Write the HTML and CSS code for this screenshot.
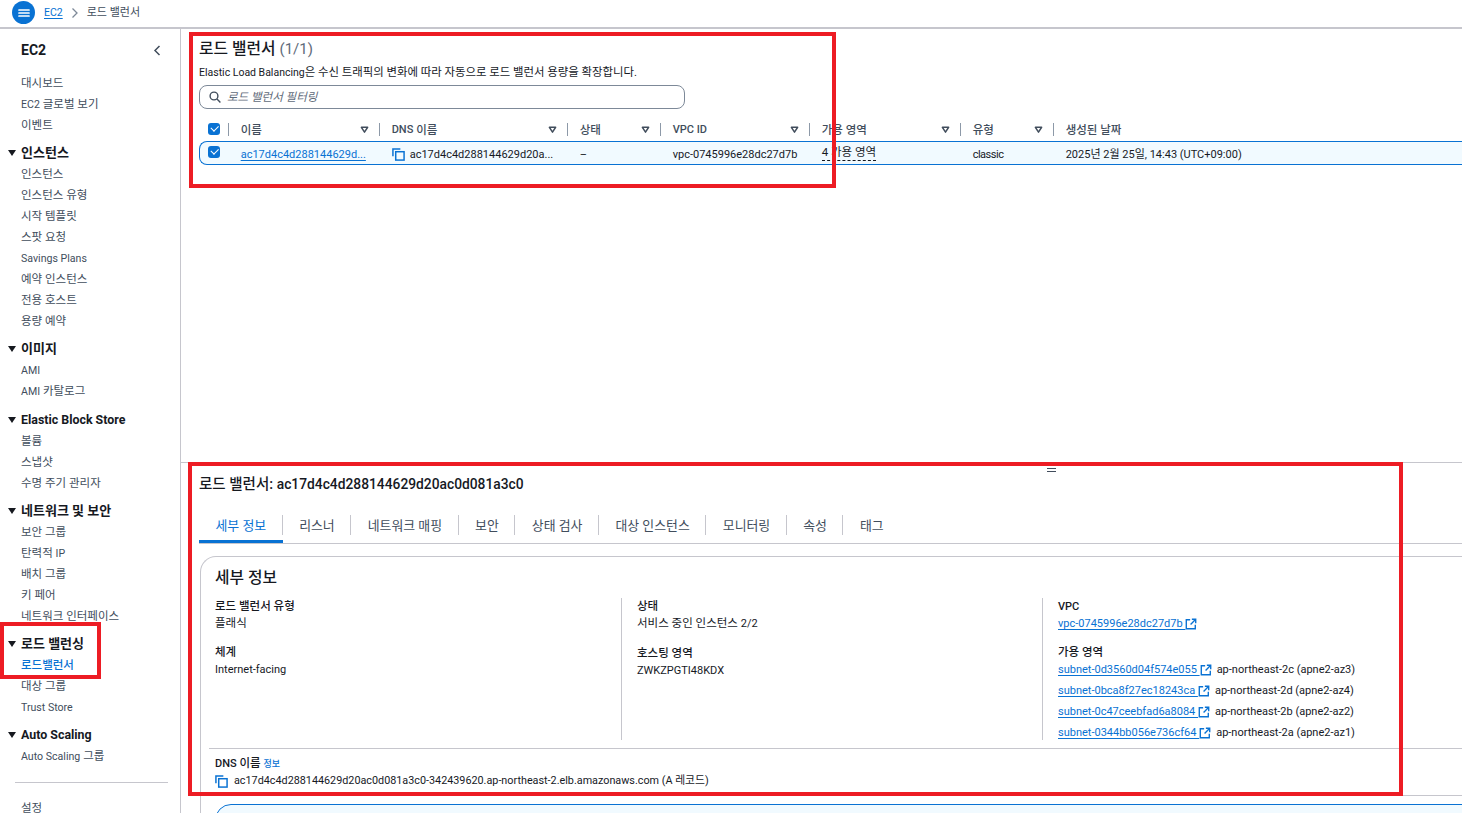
FILE: index.html
```html
<!DOCTYPE html>
<html lang="ko">
<head>
    <meta charset="UTF-8">
    <title>로드 밸런서 | EC2</title>
    <link rel="stylesheet" href="styles.css">
</head>
<body>

    <svg class="icon-defs" width="0" height="0" aria-hidden="true">
        <symbol id="i-copy" viewBox="0 0 14 14">
            <path d="M1 9V1h8" fill="none" stroke="currentColor" stroke-width="1.6"/>
            <rect x="4" y="4" width="9" height="9" fill="none" stroke="currentColor" stroke-width="1.6"/>
        </symbol>
        <symbol id="i-ext" viewBox="0 0 14 14">
            <path d="M6 2H1.5v10.5H12V8" fill="none" stroke="currentColor" stroke-width="1.6"/>
            <path d="M8 1.5h4.5V6M12.5 1.5 6.5 7.5" fill="none" stroke="currentColor" stroke-width="1.6"/>
        </symbol>
        <symbol id="i-sort" viewBox="0 0 10 10">
            <path d="M1.5 2.5h7L5 8z" fill="#fff" stroke="#414d5c" stroke-width="1.6" stroke-linejoin="round"/>
        </symbol>
    </svg>

    <header class="topbar">
        <button class="menu-btn" aria-label="메뉴">
            <svg width="12" height="8" viewBox="0 0 12 8"><path d="M1 1h10M1 4h10M1 7h10" stroke="#fff" stroke-width="1.7" stroke-linecap="round"/></svg>
        </button>
        <a class="link crumb">EC2</a>
        <svg class="crumb-sep" width="8" height="10" viewBox="0 0 8 10"><path d="M1.5.5 6 5 1.5 9.5" fill="none" stroke="#7d8998" stroke-width="1.3"/></svg>
        <span class="crumb-current">로드 밸런서</span>
    </header>

    <div class="layout">
        <nav class="sidebar">
            <div class="side-title">
                <span>EC2</span>
                <svg width="8" height="11" viewBox="0 0 8 11"><path d="M6.5 1 2 5.5 6.5 10" fill="none" stroke="#414d5c" stroke-width="1.5"/></svg>
            </div>
            <ul class="side-list">
                <li>대시보드</li>
                <li><span class="en">EC2</span> 글로벌 보기</li>
                <li>이벤트</li>
            </ul>
            <div class="side-group">인스턴스</div>
            <ul class="side-list">
                <li>인스턴스</li>
                <li>인스턴스 유형</li>
                <li>시작 템플릿</li>
                <li>스팟 요청</li>
                <li><span class="en">Savings Plans</span></li>
                <li>예약 인스턴스</li>
                <li>전용 호스트</li>
                <li>용량 예약</li>
            </ul>
            <div class="side-group">이미지</div>
            <ul class="side-list">
                <li><span class="en">AMI</span></li>
                <li><span class="en">AMI</span> 카탈로그</li>
            </ul>
            <div class="side-group side-group-ebs"><span class="en">Elastic Block Store</span></div>
            <ul class="side-list">
                <li>볼륨</li>
                <li>스냅샷</li>
                <li>수명 주기 관리자</li>
            </ul>
            <div class="side-group">네트워크 및 보안</div>
            <ul class="side-list">
                <li>보안 그룹</li>
                <li>탄력적 <span class="en">IP</span></li>
                <li>배치 그룹</li>
                <li>키 페어</li>
                <li>네트워크 인터페이스</li>
            </ul>
            <div class="side-group">로드 밸런싱</div>
            <ul class="side-list">
                <li class="active">로드밸런서</li>
                <li>대상 그룹</li>
                <li><span class="en">Trust Store</span></li>
            </ul>
            <div class="side-group"><span class="en">Auto Scaling</span></div>
            <ul class="side-list">
                <li><span class="en">Auto Scaling</span> 그룹</li>
            </ul>
            <hr class="side-rule">
            <ul class="side-list">
                <li>설정</li>
            </ul>
        </nav>

        <main class="main">
            <section class="list-pane">
                <h1 class="pane-title">로드 밸런서 <span class="counter">(1/1)</span></h1>
                <p class="pane-desc"><span class="en">Elastic Load Balancing</span>은 수신 트래픽의 변화에 따라 자동으로 로드 밸런서 용량을 확장합니다.</p>
                <div class="search">
                    <svg width="12" height="12" viewBox="0 0 12 12"><circle cx="5" cy="5" r="3.9" fill="none" stroke="#414d5c" stroke-width="1.4"/><path d="M8 8l3.4 3.4" stroke="#414d5c" stroke-width="1.4"/></svg>
                    <span>로드 밸런서 필터링</span>
                </div>

                <div class="tbl-row tbl-head">
                    <div class="cell cell-check"><span class="check"></span></div>
                    <div class="cell">이름<svg class="sort"><use href="#i-sort"/></svg></div>
                    <div class="cell"><span class="en">DNS</span>&nbsp;이름<svg class="sort"><use href="#i-sort"/></svg></div>
                    <div class="cell">상태<svg class="sort"><use href="#i-sort"/></svg></div>
                    <div class="cell"><span class="en">VPC ID</span><svg class="sort"><use href="#i-sort"/></svg></div>
                    <div class="cell">가용 영역<svg class="sort"><use href="#i-sort"/></svg></div>
                    <div class="cell">유형<svg class="sort"><use href="#i-sort"/></svg></div>
                    <div class="cell">생성된 날짜</div>
                </div>
                <div class="tbl-row tbl-selected">
                    <div class="cell cell-check"><span class="check"></span></div>
                    <div class="cell"><a class="link name-link">ac17d4c4d288144629d...</a></div>
                    <div class="cell"><svg class="copy"><use href="#i-copy"/></svg><span class="dns-short">ac17d4c4d288144629d20a...</span></div>
                    <div class="cell">–</div>
                    <div class="cell">vpc-0745996e28dc27d7b</div>
                    <div class="cell cell-az"><span class="dashed">4 가용 영역</span></div>
                    <div class="cell"><span class="type-val">classic</span></div>
                    <div class="cell">2025년 2월 25일, 14:43 (UTC+09:00)</div>
                </div>
            </section>

            <section class="detail-pane">
                <div class="drag-handle"></div>
                <h2 class="detail-title">로드 밸런서: <span class="en">ac17d4c4d288144629d20ac0d081a3c0</span></h2>
                <div class="tabs">
                    <span class="tab tab-active">세부 정보</span>
                    <span class="tab">리스너</span>
                    <span class="tab">네트워크 매핑</span>
                    <span class="tab">보안</span>
                    <span class="tab">상태 검사</span>
                    <span class="tab">대상 인스턴스</span>
                    <span class="tab">모니터링</span>
                    <span class="tab">속성</span>
                    <span class="tab">태그</span>
                </div>
                <div class="card">
                    <h3 class="card-title">세부 정보</h3>
                    <div class="columns">
                        <div class="col">
                            <div class="kv">
                                <div class="key">로드 밸런서 유형</div>
                                <div>플래식</div>
                            </div>
                            <div class="kv">
                                <div class="key">체계</div>
                                <div><span class="en">Internet-facing</span></div>
                            </div>
                        </div>
                        <div class="col">
                            <div class="kv">
                                <div class="key">상태</div>
                                <div>서비스 중인 인스턴스 <span class="en">2/2</span></div>
                            </div>
                            <div class="kv">
                                <div class="key">호스팅 영역</div>
                                <div><span class="en">ZWKZPGTI48KDX</span></div>
                            </div>
                        </div>
                        <div class="col">
                            <div class="kv">
                                <div class="key"><span class="en">VPC</span></div>
                                <div class="subnet subnet-vpc"><a class="link ext">vpc-0745996e28dc27d7b </a><svg class="ext-icon"><use href="#i-ext"/></svg></div>
                            </div>
                            <div class="kv">
                                <div class="key">가용 영역</div>
                                <div class="subnet"><a class="link ext">subnet-0d3560d04f574e055 </a><svg class="ext-icon"><use href="#i-ext"/></svg><span class="az">ap-northeast-2c (apne2-az3)</span></div>
                                <div class="subnet"><a class="link ext">subnet-0bca8f27ec18243ca </a><svg class="ext-icon"><use href="#i-ext"/></svg><span class="az">ap-northeast-2d (apne2-az4)</span></div>
                                <div class="subnet"><a class="link ext">subnet-0c47ceebfad6a8084 </a><svg class="ext-icon"><use href="#i-ext"/></svg><span class="az">ap-northeast-2b (apne2-az2)</span></div>
                                <div class="subnet"><a class="link ext">subnet-0344bb056e736cf64 </a><svg class="ext-icon"><use href="#i-ext"/></svg><span class="az">ap-northeast-2a (apne2-az1)</span></div>
                            </div>
                        </div>
                    </div>
                    <div class="dns-block">
                        <div class="key"><span class="en">DNS</span> 이름 <a class="info">정보</a></div>
                        <div class="dns-value"><svg class="copy"><use href="#i-copy"/></svg><span>ac17d4c4d288144629d20ac0d081a3c0-342439620.ap-northeast-2.elb.amazonaws.com (A 레코드)</span></div>
                    </div>
                    <div class="alert"></div>
                </div>
            </section>
        </main>
    </div>

    <!-- 스크린샷 위에 그려진 빨간 표시 -->
    <div class="mark mark-list"></div>
    <div class="mark mark-detail"></div>
    <div class="mark mark-nav"></div>

</body>
</html>
```

FILE: styles.css
```css
* {
    margin: 0;
    padding: 0;
    box-sizing: border-box;
}

body {
    position: relative;
    width: 1462px;
    height: 813px;
    overflow: hidden;
    background-color: #ffffff;
    color: #16191f;
    font-family: "Roboto", "Noto Sans CJK KR", sans-serif;
    font-size: 11.5px;
    line-height: 16px;
}

/* 라틴 글자는 한글보다 조금 작게 */
.en {
    font-size: 11px;
}

.icon-defs {
    position: absolute;
}

.link {
    color: #0972d3;
    text-decoration: underline;
    text-underline-offset: 2px;
}

/* 상단 바 */
.topbar {
    display: flex;
    align-items: center;
    height: 29px;
    padding: 0 0 2px 12px;
    border-bottom: 2px solid #c6c6cd;
}

.menu-btn {
    display: flex;
    align-items: center;
    justify-content: center;
    width: 23px;
    height: 23px;
    border: none;
    border-radius: 50%;
    background-color: #0972d3;
}

.crumb {
    margin: 1px 0 0 9px;
    font-size: 10.5px;
}

.crumb-sep {
    margin: 0 8px;
}

.crumb-current {
    margin-top: 1px;
    color: #414d5c;
    font-size: 11px;
}

.layout {
    display: flex;
    height: 784px;
}

/* 사이드바 */
.sidebar {
    flex: none;
    width: 181px;
    padding: 11px 12px 0 21px;
    border-right: 1px solid #c6c6cd;
    color: #414d5c;
}

.side-title {
    display: flex;
    justify-content: space-between;
    align-items: center;
    height: 20px;
    margin-bottom: 13px;
    padding-right: 7px;
    color: #16191f;
    font-size: 14px;
    font-weight: 700;
}

.side-list {
    list-style: none;
}

.side-list li {
    height: 21px;
    line-height: 21px;
    white-space: nowrap;
}

.side-list .en {
    font-size: 10.6px;
}

.side-list .active {
    color: #0972d3;
    font-weight: 500;
}

.side-group {
    position: relative;
    height: 22px;
    margin-top: 6px;
    line-height: 21px;
    color: #16191f;
    font-size: 13px;
    font-weight: 700;
}

.side-group .en {
    font-size: 12.4px;
}

.side-group-ebs {
    margin-top: 7px;
}

.side-group::before {
    content: "";
    position: absolute;
    left: -13px;
    top: 8px;
    border-top: 6px solid #16191f;
    border-left: 4px solid transparent;
    border-right: 4px solid transparent;
}

.side-rule {
    margin: 15px 0 15px -6px;
    border: none;
    border-top: 1px solid #c6c6cd;
}

/* 목록 영역 */
.main {
    flex: 1;
    min-width: 0;
    overflow: hidden;
}

.list-pane {
    height: 434px;
    padding: 9px 0 0 18px;
    border-bottom: 1px solid #c6c6cd;
}

.pane-title {
    height: 22px;
    font-size: 15.8px;
    line-height: 22px;
    font-weight: 500;
}

.counter {
    color: #5f6b7a;
    font-size: 15px;
    font-weight: 400;
}

.pane-desc {
    margin-top: 4px;
    font-size: 11.4px;
    white-space: nowrap;
}

.pane-desc .en {
    font-size: 10.5px;
}

.search {
    display: flex;
    align-items: center;
    gap: 6px;
    width: 486px;
    height: 24px;
    margin-top: 4px;
    padding-left: 9px;
    border: 1px solid #7d8998;
    border-radius: 8px;
    color: #5f6b7a;
    font-size: 11.5px;
    font-style: italic;
}

.tbl-row {
    display: grid;
    grid-template-columns: 29px 151px 188px 93px 149px 151px 93px 420px;
    width: 1290px;
}

.tbl-head {
    height: 24px;
    margin-top: 8px;
    color: #414d5c;
    font-weight: 500;
}

.tbl-head .cell {
    padding-top: 1px;
}

.tbl-head .cell-check {
    padding-top: 0;
}

.tbl-selected {
    grid-template-columns: 28px 151px 188px 93px 149px 151px 93px 420px;
    height: 24px;
    border: 1px solid #0972d3;
    border-right: none;
    border-radius: 8px 0 0 8px;
    background-color: #f1faff;
    font-size: 11px;
}

.cell {
    position: relative;
    display: flex;
    align-items: center;
    padding-left: 12.7px;
    white-space: nowrap;
    overflow: visible;
}

.tbl-head .cell:not(.cell-check)::before {
    content: "";
    position: absolute;
    left: 0;
    top: 6px;
    width: 1px;
    height: 13px;
    background-color: #8d99a8;
}

.cell-check {
    padding-left: 9px;
}

.tbl-selected .cell {
    padding-top: 3px;
}

.tbl-selected .cell-az {
    padding-top: 0;
}

.tbl-selected .cell-check {
    padding-top: 0;
    padding-left: 8px;
    align-items: flex-start;
}

.tbl-selected .cell-check .check {
    margin-top: 4px;
}

.check {
    position: relative;
    display: block;
    width: 12px;
    height: 12px;
    border-radius: 3px;
    background-color: #0972d3;
}

.check::after {
    content: "";
    position: absolute;
    left: 3px;
    top: 2px;
    width: 6px;
    height: 3.5px;
    border-left: 1.5px solid #fff;
    border-bottom: 1.5px solid #fff;
    transform: rotate(-45deg);
}

.sort {
    position: absolute;
    right: 10px;
    top: 8px;
    width: 9px;
    height: 9px;
}

.copy {
    flex: none;
    width: 13px;
    height: 13px;
    color: #0972d3;
}

.dns-short {
    margin-left: 5px;
}

.dashed {
    padding-bottom: 1px;
    border-bottom: 1px dashed #16191f;
    font-size: 11.5px;
    line-height: 14px;
}

.type-val {
    letter-spacing: -0.5px;
}

/* 상세 영역 */
.detail-pane {
    position: relative;
    height: 350px;
    padding: 11px 0 0 18px;
}

.drag-handle {
    position: absolute;
    left: 866px;
    top: 5px;
    width: 9px;
    height: 4px;
    border-top: 1px solid #414d5c;
    border-bottom: 1px solid #414d5c;
}

.detail-title {
    height: 20px;
    font-size: 14.5px;
    line-height: 20px;
    font-weight: 500;
}

.detail-title .en {
    font-size: 13.8px;
}

.tabs {
    display: flex;
    width: 1300px;
    height: 37px;
    margin-top: 13px;
    border-bottom: 1px solid #c6c6cd;
    color: #414d5c;
    font-size: 12.9px;
}

.tab {
    position: relative;
    height: 36px;
    padding: 11px 16.5px 0;
    line-height: 16px;
    white-space: nowrap;
}

.tab:not(:last-child)::after {
    content: "";
    position: absolute;
    right: 0;
    top: 8px;
    width: 1px;
    height: 20px;
    background-color: #c6c6cd;
}

.tab-active {
    color: #0972d3;
    border-bottom: 3px solid #0972d3;
}

.card {
    width: 1300px;
    height: 300px;
    margin: 12px 0 0 1px;
    padding-top: 11px;
    border: 1px solid #c6c6cd;
    border-radius: 16px 0 0 0;
    border-right: none;
}

.card-title {
    height: 20px;
    margin-left: 14px;
    font-size: 15.8px;
    line-height: 20px;
    font-weight: 500;
}

.columns {
    display: flex;
    height: 142px;
    margin: 10px 0 0 14px;
}

.col {
    width: 421px;
}

.col + .col {
    padding-left: 15px;
    border-left: 1px solid #c6c6cd;
}

.col:first-child {
    width: 406px;
}

.kv {
    margin-bottom: 13px;
}

.key {
    height: 17px;
    font-weight: 500;
    line-height: 17px;
}

.subnet {
    display: flex;
    align-items: flex-start;
    height: 21px;
    padding-top: 1px;
    font-size: 11px;
    white-space: pre;
}

.subnet-vpc {
    height: 15px;
    margin-top: 1px;
    padding-top: 0;
}

.ext-icon {
    flex: none;
    width: 12px;
    height: 12px;
    margin-top: 2px;
    color: #0972d3;
}

.az {
    margin-left: 5px;
}

.dns-block {
    margin: 8px 0 0 8px;
    padding: 6px 0 0 6px;
    border-top: 1px solid #c6c6cd;
    height: 48px;
    border-bottom: 1px solid #c6c6cd;
}

.info {
    color: #0972d3;
    font-size: 9px;
}

.dns-value {
    display: flex;
    align-items: center;
    gap: 6px;
    margin-top: 1px;
    font-size: 10.8px;
    white-space: nowrap;
}

.alert {
    height: 40px;
    margin: 8px 0 0 14px;
    border: 1px solid #0972d3;
    border-radius: 16px 0 0 0;
    background-color: #f1faff;
}

/* 빨간 표시 */
.mark {
    position: absolute;
    border: 4px solid #ed1c24;
}

.mark-list {
    left: 189px;
    top: 32px;
    width: 647px;
    height: 156px;
}

.mark-detail {
    left: 188px;
    top: 462px;
    width: 1215px;
    height: 334px;
}

.mark-nav {
    left: 0;
    top: 622px;
    width: 101px;
    height: 57px;
}
```
